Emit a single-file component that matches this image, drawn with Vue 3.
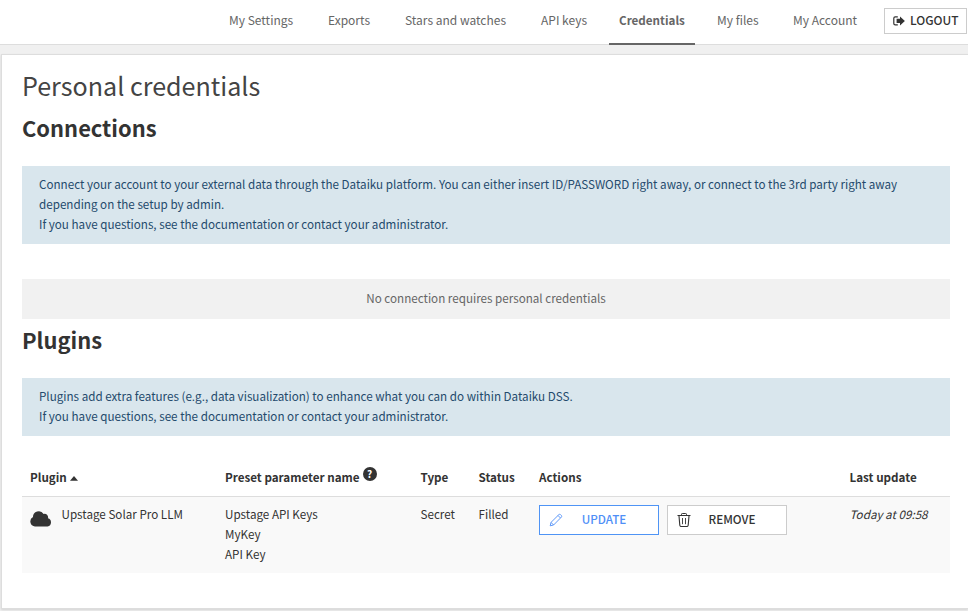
<script setup>
const tabs = ['My Settings', 'Exports', 'Stars and watches', 'API keys', 'Credentials', 'My files', 'My Account']
const active = 'Credentials'
const parameterLines = ['Upstage API Keys', 'MyKey', 'API Key']
</script>

<template>
  <div class="page">
    <header class="topbar">
      <nav class="tabs">
        <a v-for="tab in tabs" :key="tab" class="tab" :class="{ active: tab === active }"><span>{{ tab }}</span></a>
      </nav>
      <button class="btn logout">
        <svg width="12" height="10" viewBox="0 0 12 10">
          <path d="M4.8.8H2.2Q.8.8.8 2.2v5.200Q.8 8.800 2.200 8.800H4.800" fill="none" stroke="#333" stroke-width="1.200" />
          <path d="M3.600 2.800H7V.4L11.900 4.900 7 9.400V7H3.600z" fill="#333" />
        </svg>
        <span>LOGOUT</span>
      </button>
    </header>

    <main class="panel">
      <h1>Personal credentials</h1>

      <h2>Connections</h2>
      <div class="info">
        <p>Connect your account to your external data through the Dataiku platform. You can either insert ID/PASSWORD right away, or connect to the 3rd party right away<br>depending on the setup by admin.</p>
        <p>If you have questions, see the documentation or contact your administrator.</p>
      </div>
      <div class="empty">No connection requires personal credentials</div>

      <h2>Plugins</h2>
      <div class="info">
        <p>Plugins add extra features (e.g., data visualization) to enhance what you can do within Dataiku DSS.</p>
        <p>If you have questions, see the documentation or contact your administrator.</p>
      </div>

      <div class="table">
        <div class="row head">
          <div class="cell">Plugin<svg class="caret" width="8" height="5" viewBox="0 0 8 5"><path d="M0 4.800 4 0l4 4.800z" fill="#333" /></svg></div>
          <div class="cell">Preset parameter name<span class="help">?</span></div>
          <div class="cell">Type</div>
          <div class="cell">Status</div>
          <div class="cell">Actions</div>
          <div class="cell">Last update</div>
        </div>
        <div class="row body">
          <div class="cell plugin">
            <svg class="cloud" width="22" height="17" viewBox="0 0 22 17">
              <path d="M5 16.500A5 5 0 0 1 3 7.100 5.700 5.700 0 0 1 13.600 4 3.500 3.500 0 0 1 18 8.200 4.300 4.300 0 0 1 17.600 16.500z" fill="#333" />
            </svg>
            <span>Upstage Solar Pro LLM</span>
          </div>
          <div class="cell"><div v-for="line in parameterLines" :key="line">{{ line }}</div></div>
          <div class="cell">Secret</div>
          <div class="cell">Filled</div>
          <div class="cell actions">
            <button class="btn action primary">
              <svg width="14" height="14" viewBox="0 0 14 14" fill="none" stroke="#4f8ff7" stroke-width=".9" stroke-linejoin="round">
                <path d="M1.200 12.800 2 9.400 9.800 1.700Q10.600.9 11.500 1.600L12.400 2.500Q13.100 3.400 12.300 4.200L4.600 12z" />
                <path d="M2 9.400 4.600 12M9 2.500l2.500 2.500" />
              </svg>
              <span>UPDATE</span>
            </button>
            <button class="btn action">
              <svg width="14" height="14" viewBox="0 0 14 14" fill="none" stroke="#333">
                <path d="M.5 2.500h13M4.500 2.300V1.300Q4.500.5 5.300.5h3.400q.8 0 .8.8v1" />
                <path d="M2 3l.8 9.300q.1 1.200 1.300 1.200h5.800q1.200 0 1.300-1.200L12 3" stroke-width="1.100" />
                <path d="M5.500 5v6.200M8.500 5v6.200" stroke-width=".9" />
              </svg>
              <span>REMOVE</span>
            </button>
          </div>
          <div class="cell when">Today at 09:58</div>
        </div>
      </div>
    </main>
  </div>
</template>

<style>
body {
  margin: 0;
  background: #f0f0f0;
}
</style>

<style scoped>
.page {
  box-sizing: border-box;
  height: 611px;
  overflow: hidden;
  background: #f0f0f0;
  color: #333;
  font: 11.65px/20px "Noto Sans CJK JP", "Noto Sans", sans-serif;
}
.topbar {
  box-sizing: border-box;
  height: 45px;
  display: flex;
  align-items: flex-start;
  justify-content: space-between;
  padding: 0 1px 0 219px;
  background: #fff;
  border-bottom: 1px solid #ddd;
}
.tabs {
  display: grid;
  grid-template-columns: 99px 77px 136px 78px 98px 76px 84px;
}
.tab {
  box-sizing: border-box;
  height: 45px;
  justify-self: start;
  padding: 10px 10px 0;
  color: #666;
  font-size: 12px;
  white-space: nowrap;
}
.tab.active {
  width: 86px;
  font-size: 11.650px;
  font-weight: 700;
  border-bottom: 2px solid #666;
}
.btn {
  box-sizing: border-box;
  display: flex;
  align-items: center;
  border: 1px solid #ccc;
  background: #fff;
  color: #333;
  font: 500 11.650px/20px "Noto Sans CJK JP", "Noto Sans", sans-serif;
}
.btn span { padding-bottom: 2px; }
.logout {
  width: 83px;
  height: 26px;
  margin-top: 8px;
  padding: 0 0 0 8px;
  gap: 5px;
  font-size: 11.900px;
}
.panel {
  box-sizing: border-box;
  height: 555px;
  margin: 9px 0 0 1px;
  padding: 15px 18px 0 20px;
  background: #fff;
  border: solid #ddd;
  border-width: 1px 0 1px 1px;
  box-shadow: 0 1px 2px rgba(0, 0, 0, 0.12);
}
h1 {
  margin: -2px 0 2px;
  font-size: 25.100px;
  line-height: 34px;
  font-weight: 400;
  color: #444;
}
h2 {
  margin: 0;
  height: 62px;
  box-sizing: border-box;
  padding-top: 9px;
  font-size: 21.900px;
  line-height: 30px;
  font-weight: 700;
}
.empty + h2 { height: 59px; padding-top: 6px; }
.info {
  padding: 8px 17px 10px;
  background: #d9e6ed;
  color: #244a6c;
  white-space: nowrap;
}
.info p { margin: 0; }
.empty {
  box-sizing: border-box;
  height: 40px;
  margin-top: 35px;
  line-height: 38px;
  text-align: center;
  background: #f1f1f1;
  color: #666;
}
.table { margin-top: 24px; }
.row {
  display: grid;
  grid-template-columns: 195px 195.500px 58px 60.500px 310.500px 108.500px;
}
.head {
  box-sizing: border-box;
  height: 37px;
  padding-top: 7px;
  border-bottom: 1px solid #ddd;
  font-weight: 700;
}
.cell { padding: 0 8px; white-space: nowrap; }
.caret { margin-left: 3px; vertical-align: 1px; }
.help {
  display: inline-block;
  width: 14px;
  height: 14px;
  margin-left: 3px;
  border-radius: 50%;
  background: #333;
  color: #fff;
  font-size: 10px;
  line-height: 14px;
  text-align: center;
  vertical-align: 4px;
}
.body {
  box-sizing: border-box;
  height: 76px;
  padding-top: 7px;
  background: #f9f9f9;
}
.plugin { display: flex; gap: 9.500px; }
.cloud { margin-top: 6px; }
.actions { display: flex; gap: 8px; }
.action {
  width: 120px;
  height: 30px;
  margin-top: 1px;
  padding: 0 13px 0 9px;
}
.action span { flex: 1; text-align: center; }
.primary { border-color: #4f94f5; color: #4f8ff7; }
.when { font-style: italic; }
</style>
